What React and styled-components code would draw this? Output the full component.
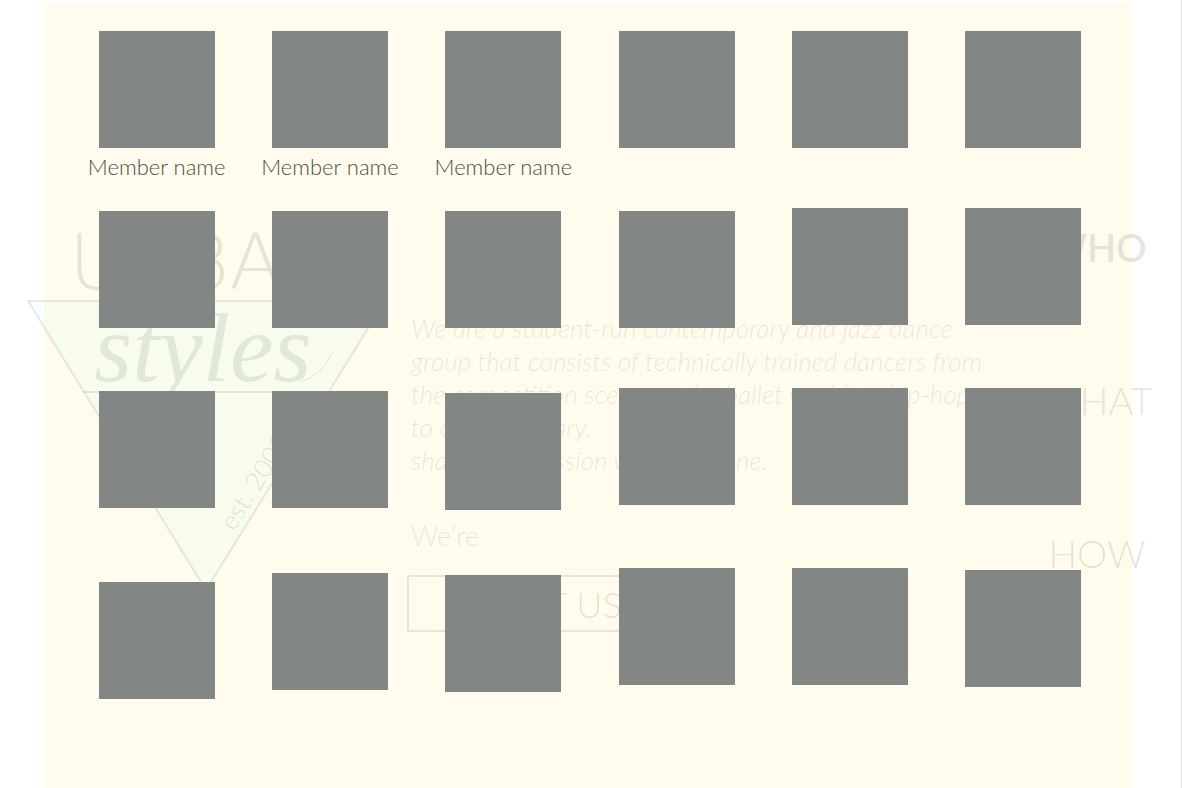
import React from "react";
import styled, { createGlobalStyle } from "styled-components";

const GlobalStyle = createGlobalStyle`
  *, *::before, *::after { box-sizing: border-box; }
  body {
    margin: 0;
    background: #ffffff;
    font-family: Lato, "Liberation Sans", sans-serif;
    font-weight: 300;
  }
`;

const Page = styled.div`
  display: grid;
  grid-template-columns: minmax(0, 1fr);
  min-height: 100vh;
  border-right: 1px solid #e4e4e6;
  overflow: hidden;
`;

/* Every layer shares the one grid cell, so they stack in source order. */
const Backdrop = styled.div`
  grid-area: 1 / 1;
  margin: 3px 49px 0 44px;
  background: #fffced;
`;

const Landing = styled.div`
  grid-area: 1 / 1;
  display: grid;
  grid-template-columns: 360px minmax(0, 1fr) 112px;
  align-items: start;
  padding: 200px 28px 0 26px;
`;

const Logo = styled.svg`
  display: block;
  width: 360px;
  height: 392px;
  overflow: visible;
`;

const About = styled.section`
  padding: 112px 0 0 25px;
`;

const Intro = styled.p`
  margin: 0;
  font-size: 26px;
  line-height: 33px;
  font-style: italic;
  white-space: nowrap;
  color: rgba(60, 50, 40, 0.12);
`;

const Lead = styled.p`
  margin: 42px 0 23px;
  font-size: 27px;
  line-height: 33px;
  color: rgba(60, 50, 40, 0.12);
`;

const MeetButton = styled.button`
  display: block;
  width: 280px;
  height: 57px;
  margin-left: -4px;
  padding: 0;
  border: 2px solid rgba(60, 50, 40, 0.11);
  background: transparent;
  font: inherit;
  font-size: 36px;
  color: rgba(60, 50, 40, 0.14);
`;

const Nav = styled.nav`
  display: flex;
  flex-direction: column;
  align-items: center;
  gap: 105px;
  padding-top: 23px;
`;

const NavLink = styled.a`
  font-size: 38px;
  line-height: 48px;
  font-weight: ${(p) => (p.$current ? 600 : 300)};
  color: rgba(60, 50, 50, 0.15);
  text-decoration: none;
`;

const Members = styled.main`
  grid-area: 1 / 1;
  display: grid;
  grid-template-columns: repeat(6, minmax(0, 1fr));
  align-items: start;
  margin: 3px 49px 0 44px;
  padding: 28px 22px 88px 26px;
`;

const Column = styled.div`
  display: flex;
  flex-direction: column;
`;

const Member = styled.figure`
  display: flex;
  flex-direction: column;
  align-items: center;
  margin: 0;
  height: ${(p) => p.$slot}px;
`;

const Photo = styled.div`
  width: 116px;
  height: 117px;
  flex: none;
  background: #828785;
`;

const Name = styled.figcaption`
  margin-top: 4px;
  font-size: 22px;
  line-height: 30px;
  white-space: nowrap;
  color: #4e4c48;
`;

const columns = [
  { name: "Member name", slots: [180, 180, 191, 117] },
  { name: "Member name", slots: [180, 180, 182, 117] },
  { name: "Member name", slots: [180, 182, 182, 117] },
  { slots: [180, 177, 180, 117] },
  { slots: [177, 180, 180, 117] },
  { slots: [177, 180, 182, 117] },
];

const intro = [
  "We are a student-run contemporary and jazz dance",
  "group that consists of technically trained dancers from",
  "the competition scene, to the ballet world, to hip-hop",
  "to contemporary.",
  "share their passion with everyone.",
];

function UrbanLogo() {
  return (
    <Logo viewBox="26 200 360 392" role="img" aria-label="Urban styles, est. 2000">
      <text
        x="69"
        y="289"
        fontSize="77"
        fontWeight="200"
        fontFamily='"DejaVu Sans", sans-serif'
        fill="rgba(60,50,40,0.12)"
      >
        URBAN
      </text>
      <path
        d="M28 301H385L206 590Z"
        fill="rgba(0,255,220,0.03)"
        stroke="rgba(60,40,40,0.1)"
        strokeWidth="2"
      />
      <path d="M83 392H329" stroke="rgba(60,40,40,0.1)" strokeWidth="2" />
      <text
        x="94"
        y="381"
        fontSize="98"
        fontStyle="italic"
        fontWeight="400"
        fontFamily='"Liberation Serif", serif'
        fill="rgba(50,55,50,0.1)"
      >
        styles
      </text>
      <path
        d="M300 382Q322 376 333 351"
        fill="none"
        stroke="rgba(50,55,50,0.12)"
      />
      <text
        transform="translate(234 532) rotate(-58)"
        fontSize="26"
        fill="rgba(60,50,40,0.15)"
      >
        est. 2000
      </text>
    </Logo>
  );
}

export default function App() {
  return (
    <>
      <GlobalStyle />
      <Page>
        <Backdrop />
        <Landing>
          <UrbanLogo />
          <About>
            <Intro>
              {intro.map((line) => (
                <React.Fragment key={line}>
                  {line}
                  <br />
                </React.Fragment>
              ))}
            </Intro>
            <Lead>We’re</Lead>
            <MeetButton type="button">MEET US</MeetButton>
          </About>
          <Nav>
            <NavLink href="#who" $current>WHO</NavLink>
            <NavLink href="#what">WHAT</NavLink>
            <NavLink href="#how">HOW</NavLink>
          </Nav>
        </Landing>
        <Members>
          {columns.map((column, c) => (
            <Column key={c}>
              {column.slots.map((slot, r) => (
                <Member key={r} $slot={slot}>
                  <Photo />
                  {r === 0 && column.name && <Name>{column.name}</Name>}
                </Member>
              ))}
            </Column>
          ))}
        </Members>
      </Page>
    </>
  );
}
